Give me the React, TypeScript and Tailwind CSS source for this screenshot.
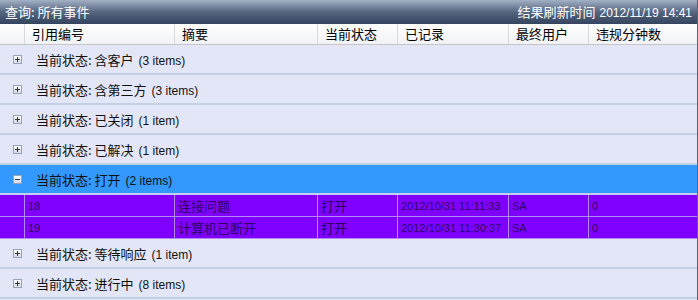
import React from 'react'

const cjk = { fontFamily: '"Noto Sans CJK SC", "Liberation Sans", sans-serif' }
const latin = { fontFamily: '"Liberation Sans", Arial, sans-serif' }

const cols = 'grid grid-cols-[25px_150px_143px_80px_111px_80px_1fr]'

const headers = ['', '引用编号', '摘要', '当前状态', '已记录', '最终用户', '违规分钟数']

type Group = { label: string; count: string; open?: boolean }

const groups: Group[] = [
  { label: '当前状态: 含客户', count: '(3 items)' },
  { label: '当前状态: 含第三方', count: '(3 items)' },
  { label: '当前状态: 已关闭', count: '(1 item)' },
  { label: '当前状态: 已解决', count: '(1 item)' },
  { label: '当前状态: 打开', count: '(2 items)', open: true },
  { label: '当前状态: 等待响应', count: '(1 item)' },
  { label: '当前状态: 进行中', count: '(8 items)' },
]

const rows = [
  ['18', '连接问题', '打开', '2012/10/31 11:11:33', 'SA', '0'],
  ['19', '计算机已断开', '打开', '2012/10/31 11:30:37', 'SA', '0'],
]

function Toggle({ open }: { open?: boolean }) {
  return (
    <span className="flex h-[9px] w-[9px] items-center justify-center border border-[#9aa3b4] bg-gradient-to-b from-white to-[#d6dae6]">
      <svg width="5" height="5" viewBox="0 0 5 5">
        <rect x="0" y="2" width="5" height="1" fill="#333" />
        {!open && <rect x="2" y="0" width="1" height="5" fill="#333" />}
      </svg>
    </span>
  )
}

function GroupRow({ g }: { g: Group }) {
  return (
    <div
      className={`flex h-[30px] items-center gap-[14px] border-b-2 pl-[13px] ${
        g.open ? 'border-[#c9cdf2] bg-[#3399ff]' : 'border-[#c1d0e4] bg-[#e3e6f7]'
      }`}
    >
      <Toggle open={g.open} />
      <span className="flex items-baseline gap-[5px] pt-[2px] text-[13px] leading-[16px] text-[#111]">
        <span style={cjk}>{g.label}</span>
        <span style={latin} className="text-[12px]">{g.count}</span>
      </span>
    </div>
  )
}

export default function App() {
  return (
    <div className="h-[300px] w-[698px] overflow-hidden border-r border-[#5c6270] bg-[#e3e6f7]">
      <div className="flex h-[24px] items-center justify-between bg-gradient-to-b from-[#a3b1c6] via-[#56667f] to-[#34445e] px-[5px] text-white">
        <span className="text-[13px] leading-[16px]" style={cjk}>查询: 所有事件</span>
        <span className="flex items-baseline gap-[4px] text-[13px] leading-[16px]">
          <span style={cjk}>结果刷新时间</span>
          <span style={latin} className="text-[12px]">2012/11/19 14:41</span>
        </span>
      </div>
      <div className={`${cols} h-[21px] border-b border-[#c4c6cc] bg-gradient-to-b from-white to-[#f1f2f4]`}>
        {headers.map((h, i) => (
          <div
            key={i}
            className={`flex items-center pl-[7px] text-[13px] leading-[16px] text-black ${i < headers.length - 1 ? 'border-r border-[#d9dadf]' : ''}`}
            style={cjk}
          >
            {h}
          </div>
        ))}
      </div>
      {groups.map((g) => (
        <React.Fragment key={g.label}>
          <GroupRow g={g} />
          {g.open &&
            rows.map((r, ri) => (
              <div key={ri} className={`${cols} h-[22px] border-b border-[#b38af5] bg-[#8000ff]`}>
                <div className="border-r border-[#b38af5]" />
                {r.map((c, ci) => {
                  const zh = ci === 1 || ci === 2
                  return (
                    <div
                      key={ci}
                      className={`flex items-center pl-[3px] text-[#2e0066] ${
                        zh ? 'text-[13px] leading-[16px]' : 'text-[11px] leading-[14px]'
                      } ${ci < r.length - 1 ? 'border-r border-[#b38af5]' : ''}`}
                      style={zh ? cjk : latin}
                    >
                      {c}
                    </div>
                  )
                })}
              </div>
            ))}
        </React.Fragment>
      ))}
    </div>
  )
}
